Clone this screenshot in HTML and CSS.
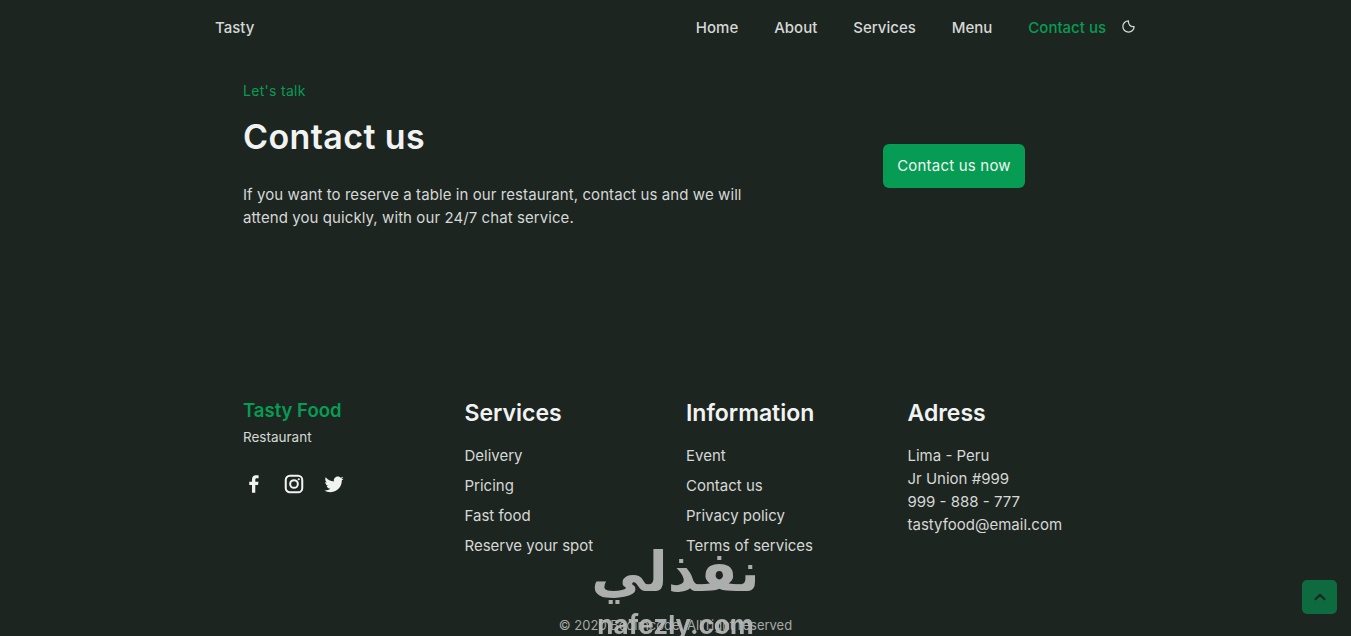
FILE: index.html
```html
<!DOCTYPE html>
<html lang="en">
<head>
    <meta charset="UTF-8">
    <title>Tasty</title>
    <link rel="stylesheet" href="styles.css">
</head>
<body>
    <header class="nav">
        <a class="nav-logo" href="#">Tasty</a>
        <ul class="nav-list">
            <li><a href="#">Home</a></li>
            <li><a href="#">About</a></li>
            <li><a href="#">Services</a></li>
            <li><a href="#">Menu</a></li>
            <li><a class="active" href="#">Contact us</a></li>
        </ul>
        <svg class="moon" viewBox="0 0 24 24" width="15" height="15" fill="none" stroke="currentColor" stroke-width="2" stroke-linejoin="round">
            <path d="M12 3a9 9 0 1 0 9 9 7.5 7.5 0 0 1-9-9z"/>
        </svg>
    </header>

    <section class="contact">
        <div class="contact-text">
            <span class="subtitle">Let's talk</span>
            <h1>Contact us</h1>
            <p>If you want to reserve a table in our restaurant, contact us and we will attend you quickly, with our 24/7 chat service.</p>
        </div>
        <div class="contact-action">
            <a class="button" href="#">Contact us now</a>
        </div>
    </section>

    <footer class="footer">
        <div class="footer-grid">
            <div>
                <a class="footer-logo" href="#">Tasty Food</a>
                <span class="footer-desc">Restaurant</span>
                <div class="social">
                    <svg viewBox="0 0 24 24" width="22" height="22" fill="currentColor">
                        <path d="M13.4 21.500v-8.500h3l.5-3.500h-3.500V7.400c0-1 .3-1.700 1.700-1.700h1.900V2.600c-.3 0-1.400-.1-2.700-.1-2.700 0-4.500 1.600-4.500 4.600v2.400H6.800V13h3v8.500z"/>
                    </svg>
                    <svg viewBox="0 0 24 24" width="22" height="22" fill="none" stroke="currentColor" stroke-width="2.200">
                        <rect x="3" y="3" width="18" height="18" rx="4.500"/>
                        <circle cx="12" cy="12" r="4.200"/>
                        <circle cx="17.200" cy="6.800" r="1.200" fill="currentColor" stroke="none"/>
                    </svg>
                    <svg viewBox="0 0 24 24" width="22" height="22" fill="currentColor">
                        <path d="M22.500 5.900c-.8.300-1.600.6-2.500.7.900-.5 1.600-1.400 1.900-2.400-.8.500-1.800.9-2.700 1-.8-.8-1.900-1.300-3.100-1.300-2.800 0-4.800 2.600-4.200 5.300-3.600-.2-6.800-1.900-8.900-4.600-1.100 1.900-.6 4.400 1.300 5.700-.7 0-1.400-.2-1.900-.5 0 2 1.400 3.900 3.500 4.300-.6.200-1.300.2-1.900.1.500 1.700 2.100 2.900 4 3-1.800 1.400-4.100 2-6.400 1.800 1.900 1.200 4.200 1.900 6.600 1.900 8 0 12.600-6.800 12.300-12.900.9-.6 1.600-1.400 2.200-2.300z"/>
                    </svg>
                </div>
            </div>
            <div>
                <h2>Services</h2>
                <ul class="footer-links">
                    <li><a href="#">Delivery</a></li>
                    <li><a href="#">Pricing</a></li>
                    <li><a href="#">Fast food</a></li>
                    <li><a href="#">Reserve your spot</a></li>
                </ul>
            </div>
            <div>
                <h2>Information</h2>
                <ul class="footer-links">
                    <li><a href="#">Event</a></li>
                    <li><a href="#">Contact us</a></li>
                    <li><a href="#">Privacy policy</a></li>
                    <li><a href="#">Terms of services</a></li>
                </ul>
            </div>
            <div>
                <h2>Adress</h2>
                <ul class="footer-address">
                    <li>Lima - Peru</li>
                    <li>Jr Union #999</li>
                    <li>999 - 888 - 777</li>
                    <li>tastyfood@email.com</li>
                </ul>
            </div>
        </div>
        <p class="copy">&copy; 2020 Bedimcode. All right reserved</p>
    </footer>

    <a class="scrolltop" href="#">
        <svg viewBox="0 0 24 24" width="18" height="18" fill="none" stroke="currentColor" stroke-width="2.500" stroke-linecap="round" stroke-linejoin="round">
            <path d="M6 15l6-6 6 6"/>
        </svg>
    </a>

    <div class="watermark">
        <span class="watermark-ar" lang="ar" dir="rtl">نفذلي</span>
        <span class="watermark-en">nafezly.com</span>
    </div>
</body>
</html>
```

FILE: styles.css
```css
* {
    box-sizing: border-box;
}

body {
    margin: 0;
    height: 636px;
    overflow: hidden;
    background: #1d2521;
    color: #d6d8d6;
    font-family: Inter, 'Open Sans', sans-serif;
    font-size: 15px;
}

a {
    color: inherit;
    text-decoration: none;
}

ul {
    list-style: none;
    margin: 0;
    padding: 0;
}

.nav {
    width: 921px;
    height: 54px;
    margin: 0 auto;
    display: flex;
    align-items: center;
    font-weight: 500;
}

.nav-logo {
    margin-right: auto;
}

.nav-list {
    display: flex;
    gap: 36px;
}

.nav-list .active {
    color: #069c54;
}

.moon {
    margin-left: 15px;
    margin-top: -2px;
}

.contact {
    width: 865px;
    margin: 0 auto;
    display: flex;
    height: 314px;
}

.contact-text {
    width: 557px;
    padding-top: 28px;
}

.subtitle {
    display: block;
    color: #069c54;
    font-size: 14px;
    letter-spacing: .3px;
    line-height: 18px;
}

h1 {
    margin: 17px 0 26px;
    font-size: 34px;
    letter-spacing: .4px;
    line-height: 40px;
    font-weight: 600;
    color: #f1f3f2;
}

.contact-text p {
    margin: 0;
    width: 515px;
    line-height: 23px;
    letter-spacing: .08px;
}

.contact-action {
    flex: 1;
    display: flex;
    justify-content: center;
    padding-top: 90px;
}

.button {
    width: 142px;
    height: 44px;
    display: flex;
    align-items: center;
    justify-content: center;
    background: #069c54;
    color: #f1f3f2;
    border-radius: 6px;
    letter-spacing: .2px;
    padding-bottom: 1px;
}

.footer {
    width: 865px;
    margin: 0 auto;
}

.footer-grid {
    display: grid;
    grid-template-columns: repeat(4, 200.500px);
    gap: 21px;
    height: 249px;
    padding-top: 28px;
}

.footer-logo {
    display: block;
    color: #069c54;
    font-size: 18.500px;
    font-weight: 600;
    line-height: 28px;
}

.footer-desc {
    display: block;
    margin-top: 4px;
    font-size: 13.500px;
    line-height: 18px;
}

.social {
    display: flex;
    gap: 18px;
    margin-top: 27px;
    color: #f1f3f2;
}

h2 {
    margin: 1px 0 12px;
    font-size: 23px;
    line-height: 32px;
    font-weight: 600;
    color: #f1f3f2;
}

.footer-links li {
    line-height: 30px;
}

.footer-address {
    padding-top: 3px;
}

.footer-address li {
    line-height: 23px;
}

.copy {
    margin: 0;
    text-align: center;
    font-size: 13px;
    color: #a6a9a7;
}

.scrolltop {
    position: fixed;
    right: 14px;
    bottom: 22px;
    width: 35px;
    height: 34px;
    display: flex;
    align-items: center;
    justify-content: center;
    background: #0e6b40;
    color: #1d2521;
    border-radius: 5px;
}

.watermark {
    position: fixed;
    left: 593px;
    top: 541px;
    width: 165px;
    display: flex;
    flex-direction: column;
    align-items: center;
    color: #bcbebc;
    opacity: .9;
    pointer-events: none;
}

.watermark-ar {
    font-family: 'DejaVu Sans', sans-serif;
    font-size: 55px;
    font-weight: 700;
    line-height: 62px;
}

.watermark-en {
    font-size: 26px;
    font-weight: 700;
    line-height: 32px;
    margin-top: 6px;
}
```
